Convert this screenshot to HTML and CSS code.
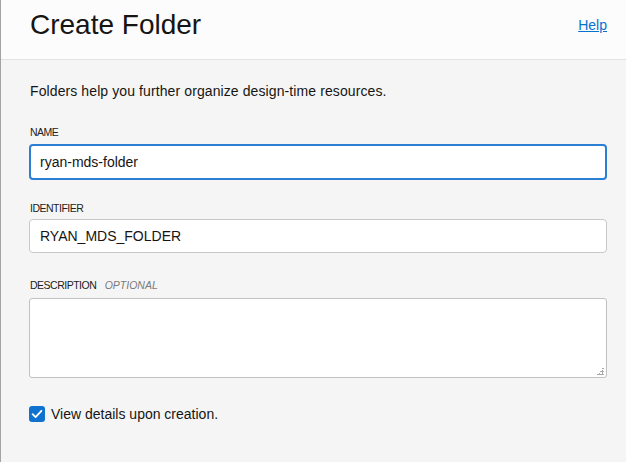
FILE: index.html
```html
<!DOCTYPE html>
<html>
<head>
<meta charset="utf-8">
<link rel="stylesheet" href="styles.css">
</head>
<body>
<div class="page">
  <header class="header">
    <h1 class="title">Create Folder</h1>
    <a class="help" href="#">Help</a>
  </header>
  <main class="content">
    <p class="intro">Folders help you further organize design-time resources.</p>
    <div class="field field-name">
      <label class="label">Name</label>
      <div class="input focused">ryan-mds-folder</div>
    </div>
    <div class="field field-id">
      <label class="label">Identifier</label>
      <div class="input">RYAN_MDS_FOLDER</div>
    </div>
    <div class="field field-desc">
      <label class="label">Description <span class="optional">Optional</span></label>
      <div class="textarea">
        <svg class="grip" width="7" height="7" viewBox="0 0 7 7"><rect x="5" y="0" width="2" height="1" fill="#aaa"/><rect x="3" y="3" width="4" height="1" fill="#aaa"/><rect x="5" y="2" width="1" height="1" fill="#aaa"/><rect x="0" y="6" width="7" height="1" fill="#aaa"/><rect x="5" y="4" width="1" height="2" fill="#aaa"/><rect x="2" y="5" width="1" height="1" fill="#aaa"/></svg>
      </div>
    </div>
    <div class="check-row">
      <span class="checkbox">
        <svg width="16" height="16" viewBox="0 0 16 16"><path d="M3.6 8.2 L6.6 11.1 L12.4 4.8" fill="none" stroke="#fff" stroke-width="1.8" stroke-linecap="round" stroke-linejoin="round"/></svg>
      </span>
      <span class="check-label">View details upon creation.</span>
    </div>
  </main>
</div>
</body>
</html>
```

FILE: styles.css
```css
html, body {
  margin: 0;
  padding: 0;
  height: 100%;
}
body {
  font-family: "Liberation Sans", Arial, sans-serif;
  color: #161513;
  background: #f5f5f5;
}
.page {
  border-left: 1px solid #a3a3a3;
  min-height: 100%;
  box-sizing: border-box;
  background: #f5f5f5;
}
.header {
  height: 60px;
  box-sizing: border-box;
  background: #fcfcfc;
  border-bottom: 1px solid #e2e2e2;
  display: flex;
  align-items: flex-start;
  justify-content: space-between;
  padding: 0 19px 0 29px;
}
.title {
  margin: 9px 0 0;
  font-size: 28px;
  font-weight: normal;
  line-height: 32px;
  color: #161513;
}
.help {
  margin-top: 17px;
  font-size: 14px;
  line-height: 16px;
  color: #0572ce;
  text-decoration: underline;
}
.content {
  padding: 22px 19px 0 28px;
}
.intro {
  margin: 0 0 26px 1px;
  font-size: 14px;
  line-height: 18px;
  letter-spacing: 0.1px;
}
.field-name {
  margin-bottom: 22px;
}
.field-id {
  margin-bottom: 26px;
}
.field-desc {
  margin-bottom: 27px;
}
.label {
  display: block;
  font-size: 10.5px;
  line-height: 12px;
  text-transform: uppercase;
  letter-spacing: -0.5px;
  color: #222;
  margin: 0 0 6px 1px;
}
.field-id .label {
  margin-bottom: 5px;
}
.field-desc .label {
  margin-bottom: 7px;
}
.optional {
  font-style: italic;
  color: #7a7a7a;
  margin-left: 6px;
  letter-spacing: 0;
}
.input {
  height: 34px;
  box-sizing: border-box;
  background: #fff;
  border: 1px solid #c8c8c8;
  border-radius: 4px;
  padding: 0 10px;
  font-size: 14px;
  line-height: 32px;
}
.input.focused {
  height: 36px;
  border: 2px solid #2a7fd4;
  padding: 0 9px;
}
.textarea {
  height: 80px;
  box-sizing: border-box;
  background: #fff;
  border: 1px solid #c1c1c4;
  border-radius: 3px;
  position: relative;
}
.grip {
  position: absolute;
  right: 2px;
  bottom: 2px;
}
.check-row {
  display: flex;
  align-items: center;
  gap: 6px;
}
.checkbox {
  width: 16px;
  height: 16px;
  border-radius: 3px;
  background: #0f72d0;
  display: inline-flex;
}
.check-label {
  font-size: 14px;
  line-height: 18px;
}
```
